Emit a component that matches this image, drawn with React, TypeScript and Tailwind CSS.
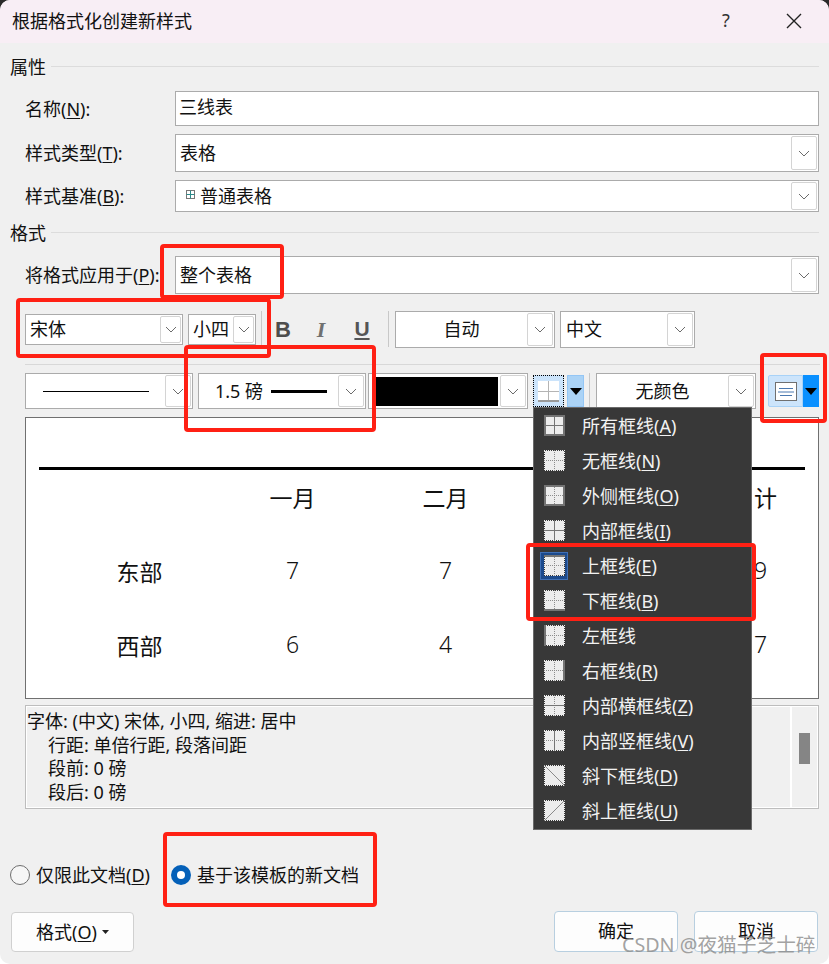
import React from 'react';

const FONT = '"Noto Sans", "Noto Sans CJK SC", sans-serif';

const Chevron = ({ size = 14 }: { size?: number }) => (
  <svg width={size} height={size} viewBox="0 0 14 14" fill="none" stroke="#6b6b6b" strokeWidth="1">
    <path d="M2 5 L7 10 L12 5" />
  </svg>
);

const Caret = ({ className = '' }: { className?: string }) => (
  <svg width="12" height="7" viewBox="0 0 12 7" className={className}>
    <path d="M0 0 H12 L6 7 Z" fill="#000" />
  </svg>
);

const ChevBox = ({ w = 'w-[26px]' }: { w?: string }) => (
  <div className={`${w} shrink-0 my-px mr-px flex items-center justify-center bg-white border border-[#d4d4d4] rounded-[2px]`}>
    <Chevron />
  </div>
);

// 下拉框
const Combo = ({ className, children, chev }: { className: string; children?: React.ReactNode; chev?: string }) => (
  <div className={`flex bg-white border border-[#ababab] ${className}`}>
    <div className="flex-1 min-w-0 flex items-center overflow-hidden">{children}</div>
    <ChevBox w={chev} />
  </div>
);

const Key = ({ k }: { k: string }) => (
  <>
    (<u className="underline underline-offset-2 decoration-1">{k}</u>)
  </>
);

const Heading = ({ text, className }: { text: string; className: string }) => (
  <div className={`flex items-center gap-[5px] pl-[10px] pr-[10px] h-[24px] text-[18px] leading-[24px] ${className}`}>
    <span>{text}</span>
    <div className="flex-1 h-px mb-[2px] bg-[#dcdcdc]" />
  </div>
);

const Label = ({ children, w = 'w-[150px]' }: { children: React.ReactNode; w?: string }) => (
  <div className={`${w} shrink-0 text-[18px] leading-[24px] whitespace-nowrap`}>{children}</div>
);

// 框线图标：虚线网格 + 实线
const BorderIcon = ({ lines = [] }: { lines?: string[] }) => {
  const paths: Record<string, string> = {
    top: 'M0 1 H21',
    bottom: 'M0 20 H21',
    left: 'M1 0 V21',
    right: 'M20 0 V21',
    h: 'M0 10.5 H21',
    v: 'M10.5 0 V21',
    down: 'M0.5 0.5 L20.5 20.5',
    up: 'M0.5 20.5 L20.5 0.5',
  };
  const diagonal = lines.includes('down') || lines.includes('up');
  return (
    <svg width="21" height="21" viewBox="0 0 21 21" className="block" shapeRendering="crispEdges">
      <rect x="0" y="0" width="21" height="21" fill="#ededed" />
      <rect x="0.5" y="0.5" width="20" height="20" fill="none" stroke="#383838" strokeDasharray="1 1" />
      {!diagonal && (
        <path d="M0 10.5 H21 M10.5 0 V21" stroke="#8c8c8c" strokeDasharray="1 1" />
      )}
      {lines.map((l) => (
        <path
          key={l}
          d={paths[l]}
          stroke={l === 'down' || l === 'up' ? '#8a8a8a' : '#747474'}
          strokeWidth={l === 'top' || l === 'bottom' || l === 'left' || l === 'right' ? 2 : 1}
          fill="none"
          shapeRendering={l === 'down' || l === 'up' ? 'auto' : 'crispEdges'}
        />
      ))}
    </svg>
  );
};

const menuItems: { text: string; k?: string; lines: string[]; active?: boolean }[] = [
  { text: '所有框线', k: 'A', lines: ['top', 'bottom', 'left', 'right', 'h', 'v'] },
  { text: '无框线', k: 'N', lines: [] },
  { text: '外侧框线', k: 'O', lines: ['top', 'bottom', 'left', 'right'] },
  { text: '内部框线', k: 'I', lines: ['h', 'v'] },
  { text: '上框线', k: 'E', lines: ['top'], active: true },
  { text: '下框线', k: 'B', lines: ['bottom'] },
  { text: '左框线', lines: ['left'] },
  { text: '右框线', k: 'R', lines: ['right'] },
  { text: '内部横框线', k: 'Z', lines: ['h'] },
  { text: '内部竖框线', k: 'V', lines: ['v'] },
  { text: '斜下框线', k: 'D', lines: ['down'] },
  { text: '斜上框线', k: 'U', lines: ['up'] },
];

const BorderMenu = () => (
  <div className="absolute left-[533px] top-[407px] w-[219px] h-[423px] bg-[#383838] border border-[#6a6a6a] text-[#f2f2f2] text-[18px]">
    {menuItems.map((m) => (
      <div key={m.text} className="h-[35px] flex items-center pl-[6px]">
        <div
          className={`w-[28px] h-[28px] shrink-0 flex items-center justify-center ${
            m.active ? 'bg-[#1c4a8c] border border-[#3f6fb5]' : ''
          }`}
        >
          <BorderIcon lines={m.lines} />
        </div>
        <span className="ml-[14px] whitespace-nowrap leading-[24px]">
          {m.text}
          {m.k && <Key k={m.k} />}
        </span>
      </div>
    ))}
  </div>
);

const Mark = ({ className }: { className: string }) => (
  <div className={`absolute border-[4px] border-[#ff2014] rounded-[4px] pointer-events-none ${className}`} />
);

// 第四列和最后一列的大部分被下拉菜单挡住，只留露出来的部分
const previewRows = [
  ['', '一月', '二月', '', '计'],
  ['东部', '7', '7', '', '9'],
  ['西部', '6', '4', '', '7'],
];

const Preview = () => (
  <div className="ml-[25px] mr-[10px] mt-[8px] h-[282px] bg-white border border-[#707070] pt-[49px] px-[13px]">
    <div className="h-[3px] bg-black" />
    {previewRows.map((row, i) => (
      <div key={i} className={`grid grid-cols-[153px_153px_153px_153px_153px] pl-[24px] ${i === 0 ? 'mt-[13px]' : 'mt-[44px]'}`}>
        {row.map((c, j) => {
          const isNumber = i > 0 && j > 0;
          return (
            <div
              key={j}
              className={`text-[23px] leading-[30px] ${j === 4 ? 'pl-[79px] text-left' : 'text-center'} ${
                isNumber ? '-mt-[2px] font-light' : ''
              }`}
            >
              {c}
            </div>
          );
        })}
      </div>
    ))}
  </div>
);

export default function App() {
  return (
    <div className="w-[829px] h-[964px] bg-[linear-gradient(#2a2a2a_50%,#ffffff_50%)]">
      <div className="relative w-[829px] h-[964px] overflow-hidden rounded-[10px] bg-[#f0f0f0] text-[#111]" style={{ fontFamily: FONT }}>
        {/* Title bar */}
        <div className="h-[43px] bg-[#f8eef5] flex items-center pl-[12px] pb-[2px]">
          <div className="text-[18px] leading-[24px] flex-1">根据格式化创建新样式</div>
          <div className="w-[20px] text-center text-[18px] text-[#333] mr-[50px]">?</div>
          <svg width="16" height="16" viewBox="0 0 16 16" className="mr-[27px]" stroke="#222" strokeWidth="1.4">
            <path d="M1 1 L15 15 M15 1 L1 15" />
          </svg>
        </div>

        <Heading text="属性" className="mt-[12px]" />
        <div className="flex items-center pl-[25px] pr-[10px] mt-[12px] h-[35px]">
          <Label>
            名称<Key k="N" />:
          </Label>
          <div className="flex-1 h-full bg-white border border-[#ababab] flex items-center pl-[3px] pb-[2px] text-[18px]">三线表</div>
        </div>
        <div className="flex items-center pl-[25px] pr-[10px] mt-[8px] h-[38px]">
          <Label>
            样式类型<Key k="T" />:
          </Label>
          <Combo className="flex-1 h-full text-[18px] pl-[4px]">表格</Combo>
        </div>
        <div className="flex items-center pl-[25px] pr-[10px] mt-[8px] h-[32px]">
          <Label>
            样式基准<Key k="B" />:
          </Label>
          <Combo className="flex-1 h-full text-[18px] pl-[10px]">
            <svg width="9" height="9" viewBox="0 0 9 9" className="mr-[5px] mb-[4px] shrink-0">
              <rect x="0.5" y="0.5" width="8" height="8" fill="#fff" stroke="#777" />
              <path d="M0.5 4.5 H8.5 M4.5 0.5 V8.5" stroke="#2c8a8a" />
            </svg>
            普通表格
          </Combo>
        </div>

        <Heading text="格式" className="mt-[9px]" />
        <div className="flex items-center pl-[25px] pr-[10px] mt-[11px] h-[38px]">
          <Label>
            将格式应用于<Key k="P" />:
          </Label>
          <Combo className="flex-1 h-full text-[18px] pl-[4px]">整个表格</Combo>
        </div>

        {/* Font toolbar */}
        <div className="flex items-center pl-[25px] pr-[10px] mt-[17px] h-[36px] text-[18px]">
          <Combo className="w-[158px] h-[31px] pl-[4px]" chev="w-[21px]">宋体</Combo>
          <Combo className="w-[68px] h-[31px] ml-[5px] pl-[4px]" chev="w-[21px]">小四</Combo>
          <div className="w-px h-[36px] bg-[#c8c8c8] ml-[5px]" />
          <span className="w-[42px] text-center font-bold text-[#4d4d4d] text-[22px]" style={{ fontFamily: '"Liberation Sans", sans-serif' }}>B</span>
          <span className="w-[34px] text-center italic font-bold text-[#707070] text-[22px]" style={{ fontFamily: '"Liberation Serif", serif' }}>I</span>
          <span className="w-[48px] text-center underline font-bold text-[#555] text-[21px]" style={{ fontFamily: '"Liberation Sans", sans-serif' }}>U</span>
          <div className="w-px h-[36px] bg-[#c8c8c8] ml-[2px]" />
          <Combo className="w-[160px] h-[37px] ml-[6px]"><span className="w-full text-center">自动</span></Combo>
          <Combo className="w-[135px] h-[37px] ml-[5px] pl-[5px]">中文</Combo>
        </div>

        <div className="ml-[25px] mt-[17px] h-px bg-[#d8d8d8] w-[795px]" />

        {/* Border toolbar */}
        <div className="flex pl-[25px] mt-[8px] h-[36px] text-[18px]">
          <Combo className="w-[168px] h-full">
            <div className="ml-[17px] w-[106px] h-px bg-black" />
          </Combo>
          <Combo className="w-[168px] h-full ml-[5px]">
            <span className="ml-[16px] whitespace-nowrap">1.5 磅</span>
            <div className="ml-[8px] w-[56px] h-[3px] bg-black" />
          </Combo>
          <Combo className="w-[160px] h-full ml-[2px]">
            <div className="ml-[6px] w-[123px] shrink-0 h-[29px] bg-black" />
          </Combo>
          <div className="ml-[5px] mt-[2px] flex h-[32px]">
            <div className="w-[31px] bg-[#cce4fb] border border-dotted border-black flex items-center justify-center">
              <svg width="21" height="21" viewBox="0 0 21 21" shapeRendering="crispEdges">
                <rect width="21" height="21" fill="#fff" />
                <path d="M0 10.5 H21 M10.5 0 V21" stroke="#b4b4b4" />
                <path d="M0 20 H21" stroke="#9a9a9a" strokeWidth="2" />
              </svg>
            </div>
            <div className="ml-[3px] w-[17px] bg-[#abd3f6] border border-[#94c6f5] flex items-center justify-center">
              <Caret />
            </div>
          </div>
          <div className="w-px h-[36px] bg-[#c8c8c8] ml-[5px]" />
          <Combo className="w-[160px] h-full ml-[6px]"><span className="w-full text-center">无颜色</span></Combo>
          <div className="ml-[12px] mt-[2px] flex h-[32px]">
            <div className="w-[35px] bg-[#cce4fb] border border-[#a8d2f7] rounded-l-[2px] flex items-center justify-center">
              <svg width="22" height="19" viewBox="0 0 22 19">
                <rect x="0.5" y="0.5" width="21" height="18" fill="#fff" stroke="#707070" />
                <path d="M4 6.5 H18 M3 10 H19 M5 13.5 H17" stroke="#4a78b0" />
              </svg>
            </div>
            <div className="w-[16px] bg-[#0a90ff] flex items-center justify-center">
              <Caret />
            </div>
          </div>
        </div>

        <Preview />

        {/* Description */}
        <div className="ml-[25px] mr-[10px] mt-[6px] h-[104px] border border-[#bdbdbd] flex">
          <div className="flex-1 border border-white text-[18px] leading-[23.7px] pt-[3px]">
            <div>字体: (中文) 宋体, 小四, 缩进: 居中</div>
            <div className="pl-[21px]">行距: 单倍行距, 段落间距</div>
            <div className="pl-[21px]">段前: 0 磅</div>
            <div className="pl-[21px]">段后: 0 磅</div>
          </div>
          <div className="w-[27px] border border-white flex justify-center pt-[26px]">
            <div className="w-[11px] h-[31px] bg-[#858585]" />
          </div>
        </div>

        {/* Radios */}
        <div className="flex items-center pl-[10px] mt-[53px] h-[26px] text-[18px]">
          <div className="w-[20px] h-[20px] rounded-full border border-[#6e6e6e] bg-[#f6f6f6]" />
          <span className="ml-[6px]">
            仅限此文档<Key k="D" />
          </span>
          <div className="ml-[21px] w-[20px] h-[20px] rounded-full bg-[#0460b8] flex items-center justify-center">
            <div className="w-[8px] h-[8px] rounded-full bg-white" />
          </div>
          <span className="ml-[6px]">基于该模板的新文档</span>
        </div>

        {/* Buttons */}
        <div className="flex pl-[11px] mt-[24px] text-[18px]">
          <div className="w-[123px] h-[40px] bg-[#fdfdfd] border border-[#d0d0d0] rounded-[4px] flex items-center justify-center">
            格式<Key k="O" />
            <svg width="7" height="4" viewBox="0 0 7 4" className="ml-[5px]">
              <path d="M0 0 H7 L3.5 4 Z" fill="#222" />
            </svg>
          </div>
          <div className="ml-[420px] -mt-px w-[124px] h-[41px] bg-[#fdfdfd] border border-[#b8cfe0] rounded-[4px] flex items-center justify-center">确定</div>
          <div className="ml-[16px] -mt-px w-[124px] h-[41px] bg-[#fdfdfd] border border-[#b8cfe0] rounded-[4px] flex items-center justify-center">取消</div>
        </div>

        <BorderMenu />

        {/* Red annotation boxes */}
        <Mark className="left-[160px] top-[244px] w-[124px] h-[55px]" />
        <Mark className="left-[16px] top-[298px] w-[255px] h-[60px]" />
        <Mark className="left-[184px] top-[345px] w-[192px] h-[87px]" />
        <Mark className="left-[760px] top-[353px] w-[67px] h-[70px]" />
        <Mark className="left-[526px] top-[543px] w-[230px] h-[78px]" />
        <Mark className="left-[163px] top-[832px] w-[214px] h-[75px]" />

        {/* Watermark */}
        <div className="absolute left-[622px] top-[932px] text-[19.7px] leading-[26px] text-[#8a8a8a]/80 whitespace-nowrap">CSDN @夜猫子芝士碎</div>
      </div>
    </div>
  );
}
